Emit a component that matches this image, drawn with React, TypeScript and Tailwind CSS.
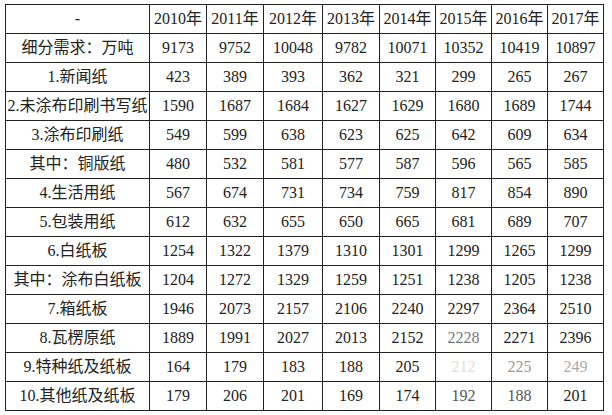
import React from "react";

const years = ["2010年", "2011年", "2012年", "2013年", "2014年", "2015年", "2016年", "2017年"];

const rows: [string, string[]][] = [
  ["细分需求：万吨", ["9173", "9752", "10048", "9782", "10071", "10352", "10419", "10897"]],
  ["1.新闻纸", ["423", "389", "393", "362", "321", "299", "265", "267"]],
  ["2.未涂布印刷书写纸", ["1590", "1687", "1684", "1627", "1629", "1680", "1689", "1744"]],
  ["3.涂布印刷纸", ["549", "599", "638", "623", "625", "642", "609", "634"]],
  ["其中：铜版纸", ["480", "532", "581", "577", "587", "596", "565", "585"]],
  ["4.生活用纸", ["567", "674", "731", "734", "759", "817", "854", "890"]],
  ["5.包装用纸", ["612", "632", "655", "650", "665", "681", "689", "707"]],
  ["6.白纸板", ["1254", "1322", "1379", "1310", "1301", "1299", "1265", "1299"]],
  ["其中：涂布白纸板", ["1204", "1272", "1329", "1259", "1251", "1238", "1205", "1238"]],
  ["7.箱纸板", ["1946", "2073", "2157", "2106", "2240", "2297", "2364", "2510"]],
  ["8.瓦楞原纸", ["1889", "1991", "2027", "2013", "2152", "2228", "2271", "2396"]],
  ["9.特种纸及纸板", ["164", "179", "183", "188", "205", "212", "225", "249"]],
  ["10.其他纸及纸板", ["179", "206", "201", "169", "174", "192", "188", "201"]],
];

const colWidths = ["w-[57px]", "w-[57px]", "w-[59px]", "w-[57px]", "w-[56px]", "w-[56px]", "w-[56px]", "w-[56px]"];

const faded: Record<string, string> = {
  "10-5": "text-[#777]",
  "11-5": "text-[#ddd]",
  "11-6": "text-[#999]",
  "11-7": "text-[#aaa]",
  "12-5": "text-[#555]",
  "12-6": "text-[#555]",
};

const App: React.FC = () => {
  return (
    <div
      className="w-[612px] h-[415px] bg-white pt-[4px] pl-[5px] text-[#222]"
      style={{ fontFamily: '"Liberation Serif", "Noto Sans CJK SC", serif' }}
    >
      <table className="border-collapse table-fixed text-[16px] leading-none">
        <thead>
          <tr className="h-[29px]">
            <th className="w-[144px] border border-[#222] font-normal text-center">-</th>
            {years.map((y, i) => (
              <th key={y} className={`${colWidths[i]} border border-[#222] font-normal text-center`}>
                {y}
              </th>
            ))}
          </tr>
        </thead>
        <tbody>
          {rows.map(([label, values], r) => (
            <tr key={label} className="h-[29px]">
              <td className="border border-[#222] text-center whitespace-nowrap">{label}</td>
              {values.map((v, c) => (
                <td key={c} className={`border border-[#222] text-center ${faded[`${r}-${c}`] || ""}`}>
                  {v}
                </td>
              ))}
            </tr>
          ))}
        </tbody>
      </table>
    </div>
  );
};

export default App;
